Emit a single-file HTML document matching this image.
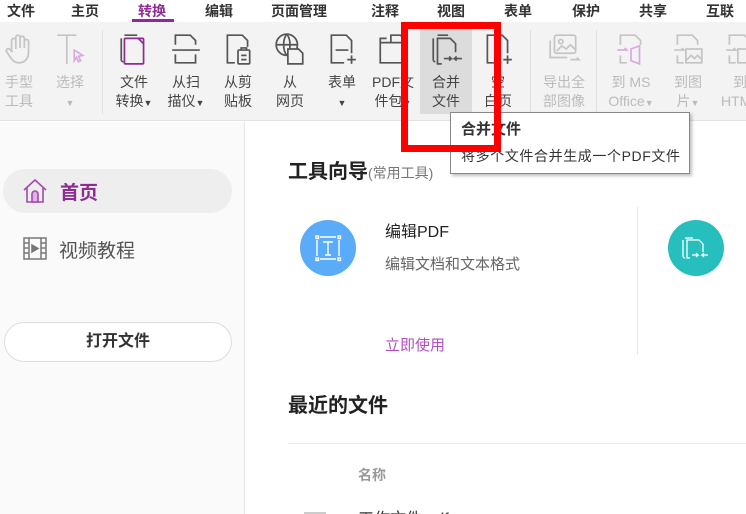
<!DOCTYPE html>
<html><head><meta charset="utf-8"><style>
*{margin:0;padding:0;box-sizing:border-box}
html,body{width:746px;height:514px;overflow:hidden}
body{background:#fff;font-family:"Liberation Sans","Noto Sans CJK SC",sans-serif;position:relative}
.a{position:absolute;white-space:nowrap}
.menu{font-size:14px;font-weight:bold;color:#333;top:1px}
.tb{position:absolute;left:0;top:22px;width:746px;height:99px;background:#f3f3f3;border-bottom:1px solid #e2e2e2}
.btn{position:absolute;top:0;width:52px;text-align:center;font-size:14px;color:#444;line-height:19px}
.btn svg{display:block;margin:10px auto 0;width:34px;height:34px}
.btn .t{margin-top:7px}
.dis{color:#bbb}
.sep{position:absolute;top:8px;width:1px;height:84px;background:#e0e0e0}
</style></head><body>
<div class="a menu" style="left:7px">文件</div>
<div class="a menu" style="left:71px">主页</div>
<div class="a menu" style="left:138px;color:#8e2b95">转换</div>
<div class="a" style="left:132px;top:19px;width:42px;height:3px;background:#8e2b95"></div>
<div class="a menu" style="left:205px">编辑</div>
<div class="a menu" style="left:271px">页面管理</div>
<div class="a menu" style="left:371px">注释</div>
<div class="a menu" style="left:437px">视图</div>
<div class="a menu" style="left:504px">表单</div>
<div class="a menu" style="left:572px">保护</div>
<div class="a menu" style="left:639px">共享</div>
<div class="a menu" style="left:706px">互联</div>

<div class="tb">
<div class="a" style="left:420px;top:5px;width:52px;height:87px;background:#dcdcdc"></div>
<div class="btn dis" style="left:-7px"><svg viewBox="0 0 30 32" fill="none" stroke="#c4c4c4" stroke-width="1.6"><path d="M8 18V8a2 2 0 014 0v8M12 14V5a2 2 0 014 0v10M16 13V6a2 2 0 014 0v9M20 14V9a2 2 0 014 0v10c0 6-4 10-9 10-4 0-6-2-8-5l-4-6a2 2 0 013-2l3 3"/></svg><div class="t">手型<br>工具</div></div>
<div class="btn dis" style="left:44px"><svg viewBox="0 0 30 32" fill="none" stroke="#c4c4c4" stroke-width="1.6"><path d="M3 3h18M12 3v27"/><path d="M19 17l8 5-4 1 2 4-2 1-2-4-2 3z" stroke="#dba8e0"/></svg><div class="t">选择<br><span style="font-size:9px">▼</span></div></div>
<div class="sep" style="left:102px"></div>
<div class="btn" style="left:108px"><svg viewBox="0 0 30 32" fill="none" stroke-width="1.6"><path d="M6 3h12M3 6v20a2 2 0 002 2" stroke="#555"/><rect x="6" y="6" width="18" height="24" rx="1" stroke="#8e2b95"/><path d="M19 6l5 5" stroke="#8e2b95"/></svg><div class="t">文件<br>转换<span style="font-size:9px">▼</span></div></div>
<div class="btn" style="left:160px"><svg viewBox="0 0 30 32" fill="none" stroke="#555" stroke-width="1.6"><path d="M5 12V3h14l5 5v4M2 17h26M5 21v8h19v-8"/></svg><div class="t">从扫<br>描仪<span style="font-size:9px">▼</span></div></div>
<div class="btn" style="left:212px"><svg viewBox="0 0 30 32" fill="none" stroke="#555" stroke-width="1.6"><path d="M12 29H5V3h14l5 5v6"/><rect x="15" y="17" width="11" height="13" rx="1"/><path d="M18 17v-2h5v2M18 22h5M18 26h5"/></svg><div class="t">从剪<br>贴板</div></div>
<div class="btn" style="left:264px"><svg viewBox="0 0 30 32" fill="none" stroke="#555" stroke-width="1.6"><circle cx="12" cy="12" r="10"/><path d="M2 12h20M12 2c-4 5-4 15 0 20M12 2c4 5 4 15 0 20"/><path d="M13 16h10l4 4v10H13z" fill="#f3f3f3"/></svg><div class="t">从<br>网页</div></div>
<div class="btn" style="left:316px"><svg viewBox="0 0 30 32" fill="none" stroke="#555" stroke-width="1.6"><path d="M17 29H5V3h14l5 5v12M9 17h12M24 22v8M20 26h8"/></svg><div class="t">表单<br><span style="font-size:9px">▼</span></div></div>
<div class="btn" style="left:367px"><svg viewBox="0 0 30 32" fill="none" stroke="#555" stroke-width="1.6"><path d="M3 10h24v19H3zM3 10V6h6M13 10V3h9l4 4v3"/></svg><div class="t">PDF文<br>件包<span style="font-size:9px">▼</span></div></div>
<div class="btn" style="left:420px"><svg viewBox="0 0 30 32" fill="none" stroke="#555" stroke-width="1.6"><path d="M7 3h10M3 6v20a2 2 0 002 2"/><path d="M11 30H7V6h12l5 5v8"/><path d="M13 25h7l-2-2M30 25h-7l2-2M18 27l2-2M25 27l-2-2"/></svg><div class="t">合并<br>文件</div></div>
<div class="btn" style="left:472px"><svg viewBox="0 0 30 32" fill="none" stroke="#555" stroke-width="1.6"><path d="M18 29H5V3h14l5 5v12M24 22v8M20 26h8"/></svg><div class="t">空<br>白页</div></div>
<div class="sep" style="left:530px"></div>
<div class="btn dis" style="left:537px;width:54px"><svg viewBox="0 0 32 32" fill="none" stroke="#c4c4c4" stroke-width="1.6"><rect x="7" y="3" width="20" height="17" rx="2"/><path d="M3 8v16h16"/><circle cx="13" cy="9" r="2"/><path d="M9 18l5-5 4 3 4-4 5 5M22 26h8l-2-2"/></svg><div class="t">导出全<br>部图像</div></div>
<div class="sep" style="left:596px"></div>
<div class="btn dis" style="left:600px;width:62px"><svg viewBox="0 0 30 32" fill="none" stroke="#c4c4c4" stroke-width="1.6"><path d="M5 12V3h14l5 5v4M5 22v7h6"/><path d="M2 17h9l-2-2" stroke="#dba8e0"/><path d="M15 16l8-3v17l-8-3z" stroke="#dba8e0"/></svg><div class="t">到 MS<br>Office<span style="font-size:9px">▼</span></div></div>
<div class="btn dis" style="left:662px"><svg viewBox="0 0 30 32" fill="none" stroke="#c4c4c4" stroke-width="1.6"><path d="M5 12V3h14l5 5v4M5 22v7h6M2 17h9l-2-2"/><rect x="13" y="16" width="15" height="13"/><path d="M13 27l5-5 3 3 3-3 4 4"/></svg><div class="t">到图<br>片<span style="font-size:9px">▼</span></div></div>
<div class="btn dis" style="left:714px"><svg viewBox="0 0 30 32" fill="none" stroke="#c4c4c4" stroke-width="1.6"><path d="M5 12V3h14l5 5v4M5 22v7h6M2 17h9l-2-2"/><rect x="13" y="16" width="15" height="13"/></svg><div class="t">到<br>HTML</div></div>
</div>

<div class="a" style="left:0;top:122px;width:245px;height:392px;background:#fafafa;border-right:1px solid #e6e6e6"></div>
<div class="a" style="left:3px;top:169px;width:229px;height:44px;border-radius:22px;background:#eeeeee"></div>
<svg class="a" style="left:22px;top:178px" width="26" height="26" viewBox="0 0 26 26" fill="none" stroke="#a24aae" stroke-width="1.6"><path d="M2 12L13 2l11 10M5 9v15h16V9"/><path d="M10 24v-8a3 3 0 016 0v8z" fill="#e0b3e6"/></svg>
<div class="a" style="left:60px;top:178px;font-size:19px;font-weight:bold;color:#8e2b95">首页</div>
<svg class="a" style="left:23px;top:237px" width="24" height="23" viewBox="0 0 24 23" fill="none" stroke="#777" stroke-width="1.5"><rect x="1" y="1" width="22" height="21"/><path d="M6 1v21M18 1v21M1 6h5M1 11h5M1 16h5M18 6h5M18 11h5M18 16h5"/><path d="M9 8l6 3.5-6 3.5z" fill="#777"/></svg>
<div class="a" style="left:59px;top:236px;font-size:19px;color:#555">视频教程</div>
<div class="a" style="left:4px;top:322px;width:228px;height:40px;border:1px solid #ddd;border-radius:20px;background:#fff;text-align:center;line-height:38px;font-size:16px;font-weight:bold;color:#333">打开文件</div>

<div class="a" style="left:288px;top:155px;font-size:20px;font-weight:bold;color:#222">工具向导<span style="font-size:14px;font-weight:normal;color:#777">(常用工具)</span></div>
<div class="a" style="left:300px;top:220px;width:56px;height:56px;border-radius:50%;background:#5aabf8"></div>
<svg class="a" style="left:312px;top:232px" width="32" height="32" viewBox="0 0 32 32" fill="none" stroke="#fff" stroke-width="1.4"><rect x="4" y="4" width="2.5" height="2.5"/><rect x="26" y="4" width="2.5" height="2.5"/><rect x="4" y="26" width="2.5" height="2.5"/><rect x="26" y="26" width="2.5" height="2.5"/><path d="M8 5h16M8 27h16M5 8v16M27 8v16M11 10h10M16 10v13M13 23h6"/></svg>
<div class="a" style="left:385px;top:218px;font-size:16px;color:#222">编辑PDF</div>
<div class="a" style="left:385px;top:253px;font-size:15px;color:#666">编辑文档和文本格式</div>
<div class="a" style="left:385px;top:334px;font-size:15px;color:#b04fc0">立即使用</div>
<div class="a" style="left:637px;top:207px;width:1px;height:148px;background:#e6e6e6"></div>
<div class="a" style="left:668px;top:220px;width:56px;height:56px;border-radius:50%;background:#26bfbd"></div>
<svg class="a" style="left:680px;top:232px" width="32" height="32" viewBox="0 0 32 32" fill="none" stroke="#fff" stroke-width="1.3"><path d="M5 6h8M3 8v16a2 2 0 002 2"/><path d="M10 26H7V8h12l4 4v8"/><path d="M12 23h6l-2-2M28 23h-6l2-2M16 25l2-2M24 25l-2-2"/></svg>

<div class="a" style="left:288px;top:389px;font-size:20px;font-weight:bold;color:#222">最近的文件</div>
<div class="a" style="left:288px;top:443px;width:458px;height:1px;background:#e8e8e8"></div>
<div class="a" style="left:358px;top:465px;font-size:14px;font-weight:bold;color:#999">名称</div>
<div class="a" style="left:358px;top:505px;font-size:16px;color:#333">工作文件.pdf</div>
<div class="a" style="left:304px;top:512px;width:22px;height:2px;background:#ccc"></div>

<div class="a" style="left:450px;top:112px;width:240px;height:62px;background:#fff;border:1px solid #888;box-shadow:2px 2px 3px rgba(0,0,0,.25)"></div>
<div class="a" style="left:461px;top:118px;font-size:15px;font-weight:bold;color:#333">合并文件</div>
<div class="a" style="left:461px;top:146px;font-size:14px;color:#333;letter-spacing:0.6px">将多个文件合并生成一个PDF文件</div>

<div class="a" style="left:401px;top:22px;width:100px;height:130px;border:7px solid #ff0000"></div>
</body></html>
